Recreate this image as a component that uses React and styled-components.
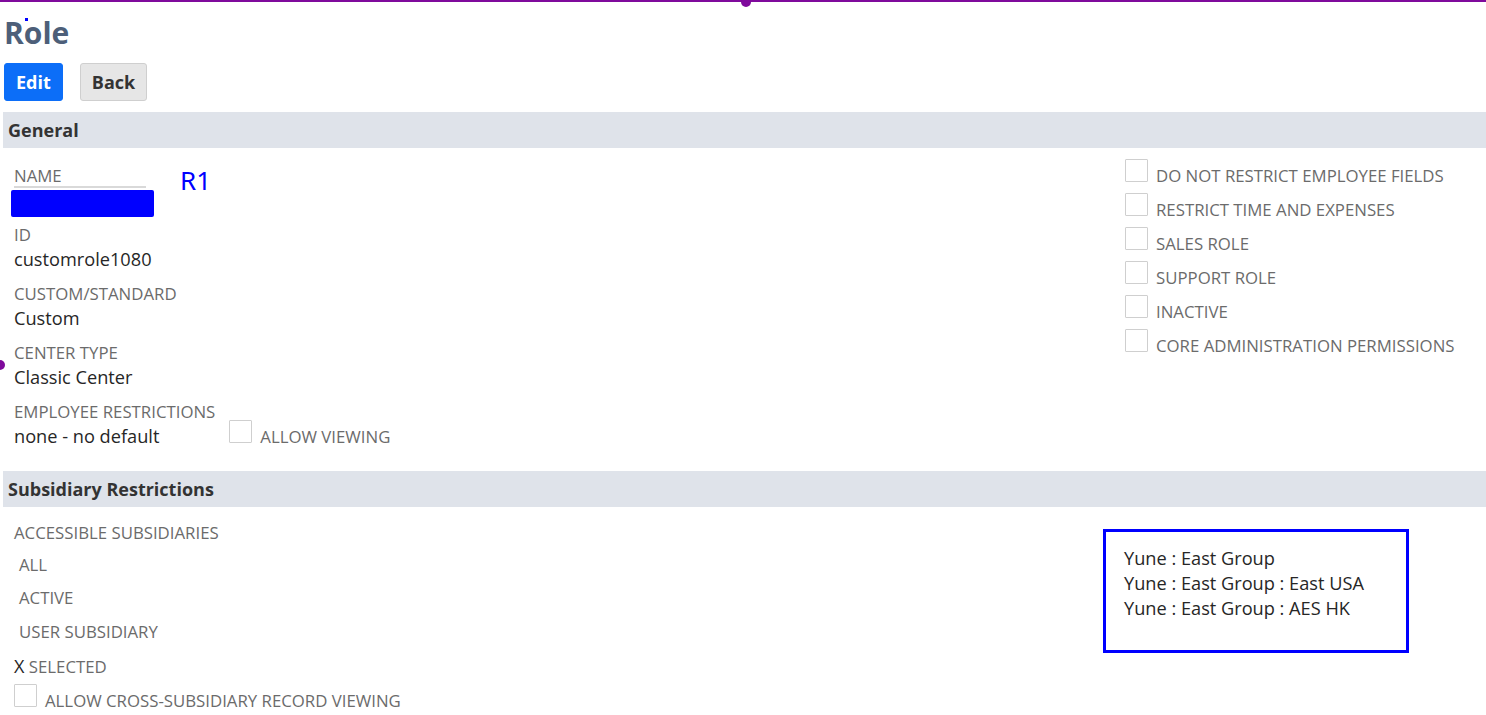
import styled, { createGlobalStyle } from "styled-components";

const GlobalStyle = createGlobalStyle`
  html, body {
    margin: 0;
    padding: 0;
    background: #ffffff;
    font-family: "Open Sans", "Liberation Sans", sans-serif;
  }
`;

const Page = styled.div`
  position: relative;
  width: 1486px;
  height: 715px;
  overflow: hidden;
`;

// selection guides drawn over the page
const GuideLine = styled.div`
  position: absolute;
  top: 0;
  left: 0;
  right: 0;
  height: 2px;
  background: #7f0a9c;
`;

const GuideDot = styled.div`
  position: absolute;
  left: ${({ x }) => x}px;
  top: ${({ y }) => y}px;
  width: ${({ size }) => size}px;
  height: ${({ size }) => size}px;
  border-radius: ${({ square }) => (square ? "0" : "50%")};
  background: ${({ color }) => color};
`;

const Title = styled.h1`
  margin: 0;
  padding: 13px 0 0 4px;
  font-size: 30px;
  line-height: 40px;
  font-weight: 700;
  color: #4d5f79;
`;

const Toolbar = styled.div`
  display: flex;
  gap: 17px;
  padding: 10px 0 0 4px;
`;

const Button = styled.button`
  height: 38px;
  padding: 0 11px;
  border-radius: 3px;
  border: 1px solid ${({ primary }) => (primary ? "#0c6ef8" : "#cfcfcf")};
  background: ${({ primary }) => (primary ? "#0c6ef8" : "#e6e6e6")};
  color: ${({ primary }) => (primary ? "#ffffff" : "#333333")};
  font-family: "Open Sans", "Liberation Sans", sans-serif;
  font-size: 18px;
  font-weight: 700;
`;

const SectionHeader = styled.div`
  margin: ${({ top }) => top}px 0 0 3px;
  height: 36px;
  display: flex;
  align-items: center;
  padding-left: 5px;
  background: #dfe3ea;
  font-size: 18px;
  font-weight: 700;
  color: #333333;
`;

const SectionBody = styled.div`
  display: flex;
  justify-content: space-between;
  align-items: flex-start;
  padding: ${({ top }) => top}px 0 0 14px;
`;

const Column = styled.div`
  display: flex;
  flex-direction: column;
`;

const Label = styled.div`
  font-size: 16.8px;
  line-height: 20px;
  color: #6b6b6b;
  text-transform: uppercase;
  white-space: nowrap;
`;

const Value = styled.div`
  font-size: 18.2px;
  line-height: 28px;
  color: #262626;
  white-space: nowrap;
`;

const Field = styled.div`
  margin-bottom: 11px;
`;

const NameRow = styled.div`
  display: flex;
  align-items: flex-start;
  gap: 26px;
`;

const NameLabel = styled(Label)`
  width: 132px;
  border-bottom: 2px solid #d9d9d9;
`;

const Redacted = styled.div`
  margin: 2px 0 8px -3px;
  width: 143px;
  height: 27px;
  border-radius: 2px;
  background: #0000ff;
`;

const Marker = styled.div`
  margin-top: -2px;
  font-family: "Noto Sans", "Open Sans", sans-serif;
  font-size: 26px;
  line-height: 32px;
  color: #0000ff;
`;

const InlineRow = styled.div`
  display: flex;
  align-items: flex-end;
  gap: 14px;
`;

const CheckRow = styled.label`
  display: flex;
  align-items: flex-start;
  gap: 8px;
  height: ${({ h }) => h || 34}px;
`;

const Box = styled.span`
  display: block;
  flex: none;
  width: 21px;
  height: 21px;
  border: 1px solid #cfcfcf;
  border-radius: 1px;
  background: #ffffff;
`;

const CheckText = styled(Label)`
  padding-top: 7px;
`;

const RightChecks = styled(Column)`
  width: 361px;
  margin-top: -7px;
`;

const GroupLabel = styled(Label)`
  margin-bottom: -2px;
`;

const Option = styled(Label)`
  padding-left: ${({ x }) => (x ? 0 : 5)}px;
  margin-top: 13.7px;
`;

const Cross = styled.span`
  color: #262626;
  font-size: 18px;
`;

const CrossRow = styled(CheckRow)`
  margin-top: 7px;
`;

const SubsidiaryBox = styled.div`
  width: 300px;
  height: 118px;
  box-sizing: content-box;
  margin: 6px 77px 0 0;
  border: 3px solid #0000ff;
`;

const SubsidiaryList = styled.div`
  padding: 14px 0 0 18px;
  font-size: 18.2px;
  line-height: 25px;
  color: #262626;
`;

const rightFlags = [
  "Do not restrict employee fields",
  "Restrict time and expenses",
  "Sales role",
  "Support role",
  "Inactive",
  "Core administration permissions",
];

const subsidiaries = [
  "Yune : East Group",
  "Yune : East Group : East USA",
  "Yune : East Group : AES HK",
];

export default function App() {
  return (
    <Page>
      <GlobalStyle />
      <Title>Role</Title>
      <Toolbar>
        <Button primary>Edit</Button>
        <Button>Back</Button>
      </Toolbar>

      <SectionHeader top={11}>General</SectionHeader>
      <SectionBody top={18}>
        <Column>
          <NameRow>
            <div>
              <NameLabel>Name</NameLabel>
              <Redacted />
            </div>
            <Marker>R1</Marker>
          </NameRow>
          <Field>
            <Label>ID</Label>
            <Value>customrole1080</Value>
          </Field>
          <Field>
            <Label>Custom/Standard</Label>
            <Value>Custom</Value>
          </Field>
          <Field>
            <Label>Center Type</Label>
            <Value>Classic Center</Value>
          </Field>
          <InlineRow>
            <div>
              <Label>Employee Restrictions</Label>
              <Value>none - no default</Value>
            </div>
            <CheckRow h={30}>
              <Box />
              <CheckText>Allow Viewing</CheckText>
            </CheckRow>
          </InlineRow>
        </Column>
        <RightChecks>
          {rightFlags.map((flag) => (
            <CheckRow key={flag}>
              <Box />
              <CheckText>{flag}</CheckText>
            </CheckRow>
          ))}
        </RightChecks>
      </SectionBody>

      <SectionHeader top={21}>Subsidiary Restrictions</SectionHeader>
      <SectionBody top={16}>
        <Column>
          <GroupLabel>Accessible Subsidiaries</GroupLabel>
          <Option>All</Option>
          <Option>Active</Option>
          <Option>User Subsidiary</Option>
          <Option x>
            <Cross>X</Cross> Selected
          </Option>
          <CrossRow h={30}>
            <Box />
            <CheckText>Allow Cross-Subsidiary Record Viewing</CheckText>
          </CrossRow>
        </Column>
        <SubsidiaryBox>
          <SubsidiaryList>
            {subsidiaries.map((s) => (
              <div key={s}>{s}</div>
            ))}
          </SubsidiaryList>
        </SubsidiaryBox>
      </SectionBody>

      <GuideLine />
      <GuideDot x={741} y={-3} size={10} color="#7f0a9c" />
      <GuideDot x={-5} y={360} size={10} color="#7f0a9c" />
      <GuideDot x={25} y={18} size={3} square color="#0000ff" />
    </Page>
  );
}
